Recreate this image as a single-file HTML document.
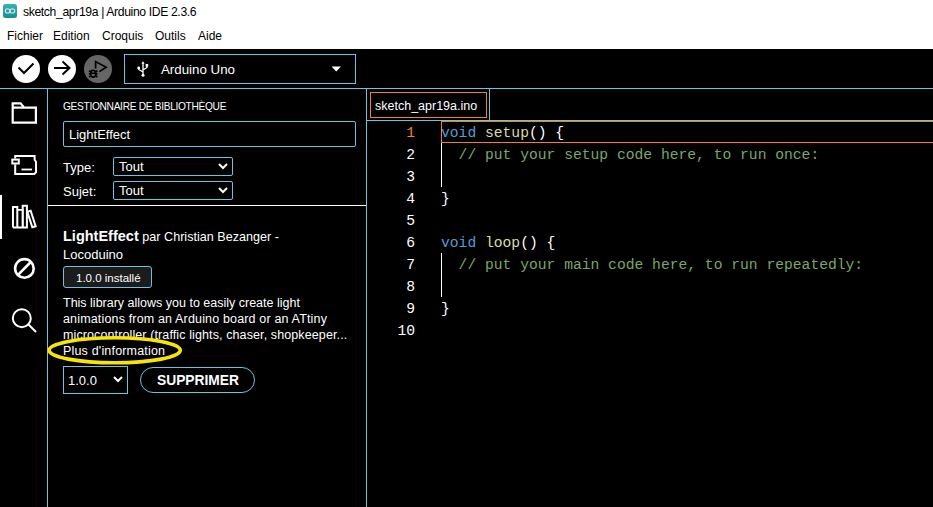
<!DOCTYPE html>
<html><head><meta charset="utf-8">
<style>
*{margin:0;padding:0;box-sizing:border-box}
html,body{width:933px;height:507px;overflow:hidden;background:#000}
body{position:relative;font-family:"Liberation Sans",sans-serif;color:#fff}
.a{position:absolute;white-space:nowrap}
#top{position:absolute;left:0;top:0;width:933px;height:49px;background:#fff;color:#000}
.t{font-size:12px;line-height:14px}
.ln{position:absolute;background:#6fc3df}
.code{font-family:"Liberation Mono",monospace;font-size:14.667px;line-height:22px;white-space:normal}
.code div{white-space:pre;height:22px}
.kw{color:#569cd6}.fn{color:#dcdcaa}.cm{color:#7ca668}
</style></head><body>
<div id="top">
  <svg class="a" style="left:3px;top:4px" width="14" height="14" viewBox="0 0 14 14"><defs><linearGradient id="g1" x1="0" y1="0" x2="0" y2="1"><stop offset="0" stop-color="#3bb0b4"/><stop offset="1" stop-color="#168e93"/></linearGradient></defs><rect x="0" y="0" width="14" height="14" rx="2.5" fill="url(#g1)"/><g stroke="#d4e8e8" stroke-width="1.1" fill="none"><ellipse cx="4.6" cy="6.9" rx="2.3" ry="2.1"/><ellipse cx="9.4" cy="6.9" rx="2.3" ry="2.1"/></g></svg>
  <div class="a t" id="title" style="left:23px;top:5px;font-size:12.2px;letter-spacing:-0.37px">sketch_apr19a | Arduino IDE 2.3.6</div>
  <div class="a t" id="m1" style="left:7px;top:29px">Fichier</div>
  <div class="a t" id="m2" style="left:53px;top:29px">Edition</div>
  <div class="a t" id="m3" style="left:102px;top:29px">Croquis</div>
  <div class="a t" id="m4" style="left:155px;top:29px">Outils</div>
  <div class="a t" id="m5" style="left:198px;top:29px">Aide</div>
</div>

<!-- toolbar -->
<svg class="a" style="left:0;top:49px" width="160" height="39" viewBox="0 49 160 39">
  <circle cx="26" cy="69" r="14" fill="#fff"/>
  <path d="M18.5 67.5 L24 73 L33.5 63.5" stroke="#000" stroke-width="2" fill="none"/>
  <circle cx="62" cy="69" r="14" fill="#fff"/>
  <path d="M54 68 H69.5 M62.5 61.5 L69.5 68 L62.5 74.5" stroke="#000" stroke-width="2" fill="none"/>
  <circle cx="98" cy="69" r="14" fill="#666666"/>
  <path d="M95.6 68.4 V61.6 L106.2 67.3 L99.3 71.6" stroke="#000" stroke-width="1.7" fill="none" stroke-linejoin="miter"/>
  <g stroke="#000" stroke-width="1.6" fill="none">
    <ellipse cx="93.2" cy="73.7" rx="2.5" ry="3.4"/>
    <path d="M90.8 73.2 H95.6 M89 70.8 L90.9 72 M97.4 70.8 L95.5 72 M88.9 73.9 H90.8 M97.5 73.9 H95.6 M89 77 L90.9 75.8 M97.4 77 L95.5 75.8"/>
  </g>
  <g stroke="#fff" stroke-width="1.3" fill="none">
    <path d="M143 63 V75.5 M138.7 67.9 V69.5 L143 72 M146.9 65.3 V67.5 L143 70"/>
  </g>
  <circle cx="143" cy="75.3" r="1.5" fill="#fff"/>
  <circle cx="138.7" cy="67.9" r="1.4" fill="#fff"/>
  <rect x="145.6" y="64" width="2.6" height="2.6" fill="#fff"/>
  <path d="M141.4 63.8 L143 61.3 L144.6 63.8 Z" fill="#fff"/>
</svg>
<div class="a" style="left:124px;top:54px;width:232px;height:30px;border:1px solid #6fc3df"></div>

<div class="a" id="board" style="left:161px;top:62px;font-size:13.3px;line-height:16px">Arduino Uno</div>
<svg class="a" style="left:331px;top:66px" width="11" height="6" viewBox="0 0 11 6"><path d="M0.5 0.5 H10 L5.25 5.5 Z" fill="#fff"/></svg>

<!-- frame lines -->
<div class="ln" style="left:0;top:88px;width:933px;height:1px"></div>
<div class="ln" style="left:47px;top:88px;width:1px;height:419px"></div>
<div class="ln" style="left:366px;top:88px;width:1px;height:419px"></div>

<!-- sidebar icons -->
<svg class="a" style="left:0;top:89px" width="47" height="260" viewBox="0 89 47 260">
  <g stroke="#fff" stroke-width="2" fill="none">
    <path d="M12.7 122.6 V103.3 H20.6 L24.2 107.6 H35.9 V122.6 Z M12.7 107.6 H24.2" stroke-width="2.2"/>
    <path d="M15.2 158.6 V156.1 H34.6 V159.8 L36 161.8 V172.3 L34.3 173.9 H15.2 V164.5"/>
    <rect x="12.3" y="159.6" width="6.5" height="3.9"/>
    <path d="M21.5 169.5 H32" stroke-width="1.8"/>
    <path d="M12.95 227.5 V206.9 H17.3 V227.5 M22.7 227.5 V205.8 H26.9 V227.5 H12.95" stroke-linejoin="miter"/>
    <path d="M17.3 209.9 H22.7 V227.5" stroke-width="1.6"/>
    <rect x="-1.75" y="-8.1" width="3.5" height="16.2" transform="translate(31.5 219.1) rotate(-18)"/>
    
    
    <circle cx="24.4" cy="268.4" r="9.3" stroke-width="2.6"/>
    <path d="M30.8 262 L18 274.8" stroke-width="2.6"/>
    <circle cx="21.8" cy="318.2" r="9"/>
    <path d="M28.5 324.5 L36 332"/>
  </g>
  <rect x="0" y="195" width="2" height="44" fill="#fff"/>
</svg>

<!-- library panel -->
<div class="a" id="hdr" style="left:63px;top:101px;font-size:10.2px;line-height:12px;letter-spacing:-0.32px">GESTIONNAIRE DE BIBLIOTHÈQUE</div>
<div class="a" style="left:63px;top:121px;width:293px;height:26px;border:1px solid #6fc3df;border-radius:2px"></div>
<div class="a" id="srch" style="left:69px;top:127px;font-size:13px;line-height:15px">LightEffect</div>
<div class="a" id="typ" style="left:63px;top:160px;font-size:13px;line-height:15px">Type:</div>
<div class="a" id="suj" style="left:63px;top:184px;font-size:13px;line-height:15px">Sujet:</div>
<div class="a" style="left:113px;top:157px;width:120px;height:19px;border:1px solid #6fc3df;border-radius:2px"></div>
<div class="a" style="left:113px;top:181px;width:120px;height:19px;border:1px solid #6fc3df;border-radius:2px"></div>
<div class="a" id="tout1" style="left:119px;top:159px;font-size:13px;line-height:15px">Tout</div>
<div class="a" id="tout2" style="left:119px;top:183px;font-size:13px;line-height:15px">Tout</div>
<svg class="a" style="left:218px;top:163px" width="10" height="7" viewBox="0 0 10 7"><path d="M1 1 L5 5 L9 1" stroke="#fff" stroke-width="2" fill="none"/></svg>
<svg class="a" style="left:218px;top:187px" width="10" height="7" viewBox="0 0 10 7"><path d="M1 1 L5 5 L9 1" stroke="#fff" stroke-width="2" fill="none"/></svg>
<div class="a" style="left:48px;top:205px;width:318px;height:1px;background:#fff"></div>

<div class="a" id="libt" style="left:63px;top:229px;font-size:13px;line-height:15px"><b id="bold" style="font-size:14.5px">LightEffect</b> <span id="par" style="font-size:12.6px">par Christian Bezanger -</span></div>
<div class="a" id="loco" style="left:63px;top:247px;font-size:13px;line-height:15px">Locoduino</div>
<div class="a" style="left:63px;top:266px;width:89px;height:22px;border:1px solid #6fc3df;border-radius:3px;background:#1c1c1c"></div>
<div class="a" id="inst" style="left:76px;top:270.5px;font-size:11.5px;line-height:15px">1.0.0 installé</div>
<div class="a" id="d1" style="left:63px;top:296px;font-size:12.5px;line-height:15px">This library allows you to easily create light</div>
<div class="a" id="d2" style="left:63px;top:312px;font-size:12.5px;line-height:15px;letter-spacing:0.16px">animations from an Arduino board or an ATtiny</div>
<div class="a" style="left:63px;top:328px;width:300px;height:14px;overflow:hidden"><div class="a" id="d3" style="left:0;top:0;font-size:12.5px;line-height:15px;letter-spacing:0.11px">microcontroller (traffic lights, chaser, shopkeeper...</div></div>
<div class="a" id="plus" style="left:63px;top:344px;font-size:12.5px;line-height:15px;letter-spacing:0.18px">Plus d'information</div>
<svg class="a" style="left:40px;top:330px" width="150" height="42" viewBox="40 330 150 42">
  <ellipse cx="114.7" cy="350.3" rx="65.6" ry="12.5" stroke="#f7e600" stroke-width="3.6" fill="none"/>
</svg>
<div class="a" style="left:63px;top:366px;width:65px;height:28px;border:1px solid #6fc3df"></div>
<div class="a" id="ver" style="left:68px;top:373px;font-size:13px;line-height:15px">1.0.0</div>
<svg class="a" style="left:113px;top:376px" width="10" height="7" viewBox="0 0 10 7"><path d="M1 1 L5 5 L9 1" stroke="#fff" stroke-width="2" fill="none"/></svg>
<div class="a" style="left:140px;top:367px;width:115px;height:26px;border:1px solid #6fc3df;border-radius:13px"></div>
<div class="a" id="supp" style="left:157px;top:373px;font-size:13.8px;line-height:16px;font-weight:bold">SUPPRIMER</div>

<!-- editor -->
<div class="ln" style="left:489px;top:88px;width:1px;height:33px"></div>
<div class="ln" style="left:367px;top:120px;width:566px;height:1px"></div>
<div class="a" style="left:370px;top:92px;width:117px;height:26px;border:1px solid #f38518"></div>
<div class="a" id="tab" style="left:375px;top:99px;font-size:12.5px;line-height:14px">sketch_apr19a.ino</div>
<div class="a" style="left:441px;top:121px;width:492px;height:22px;border:1px solid #f38518;border-right:none"></div>
<div class="a" style="left:441px;top:143px;width:1px;height:44px;background:#fff"></div>
<div class="a" style="left:441px;top:253px;width:1px;height:44px;background:#fff"></div>
<div class="a code" id="nums" style="left:365px;top:122px;width:50px;text-align:right">
<div style="color:#f38518">1</div><div>2</div><div>3</div><div>4</div><div>5</div><div>6</div><div>7</div><div>8</div><div>9</div><div>10</div>
</div>
<div class="a code" id="src" style="left:441px;top:122px">
<div><span class="kw">void</span> <span class="fn">setup</span>() {</div>
<div><span class="cm">  // put your setup code here, to run once:</span></div>
<div>&nbsp;</div>
<div>}</div>
<div>&nbsp;</div>
<div><span class="kw">void</span> <span class="fn">loop</span>() {</div>
<div><span class="cm">  // put your main code here, to run repeatedly:</span></div>
<div>&nbsp;</div>
<div>}</div>
<div>&nbsp;</div>
</div>
</body></html>
